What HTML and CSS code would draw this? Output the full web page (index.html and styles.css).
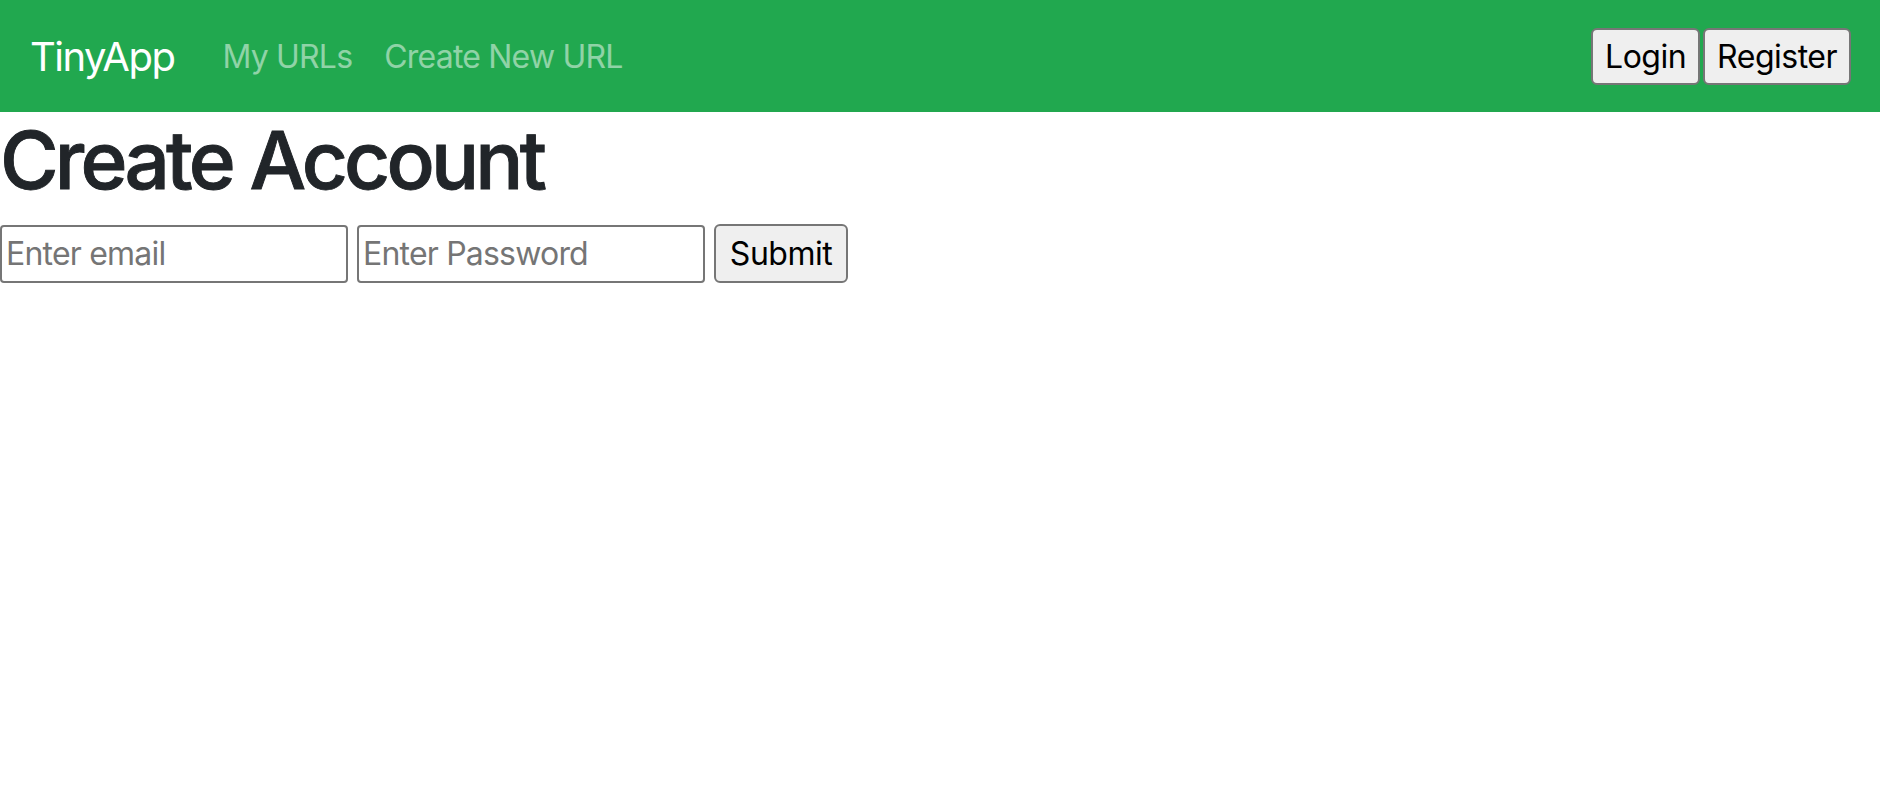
FILE: index.html
```html
<!DOCTYPE html>
<html lang="en">
<head>
<meta charset="utf-8">
<title>TinyApp - Register</title>
<link rel="stylesheet" href="styles.css">
</head>
<body>
<nav class="navbar">
  <a class="brand" href="#">TinyApp</a>
  <div class="nav-links">
    <a class="nav-link" href="#">My URLs</a>
    <a class="nav-link" href="#">Create New URL</a>
  </div>
  <div class="auth">
    <button class="btn" type="button">Login</button>
    <button class="btn" type="button">Register</button>
  </div>
</nav>
<main class="content">
  <h1 class="title">Create Account</h1>
  <form class="register-form">
    <input class="field" type="email" placeholder="Enter email">
    <input class="field" type="password" placeholder="Enter Password">
    <button class="btn submit" type="submit">Submit</button>
  </form>
</main>
</body>
</html>
```
FILE: styles.css
```css
* { box-sizing: border-box; }
html, body {
  margin: 0;
  padding: 0;
  background: #fff;
  font-family: "Inter", "Roboto", "Liberation Sans", sans-serif;
  color: #212529;
}
.navbar {
  display: flex;
  align-items: center;
  height: 112px;
  padding: 2px 29px 0 30px;
  background: #21a84f;
}
.brand {
  font-size: 40px;
  line-height: 60px;
  color: #fff;
  text-decoration: none;
  margin-right: 32px;
  letter-spacing: -1.5px;
}
.nav-links {
  display: flex;
  flex: 1;
}
.nav-link {
  font-size: 32px;
  line-height: 48px;
  padding: 0 16px;
  color: rgba(255, 255, 255, 0.5);
  text-decoration: none;
  letter-spacing: -0.8px;
}
.auth {
  display: flex;
  gap: 3px;
  margin-top: -2px;
}
.btn {
  font-family: inherit;
  font-size: 32px;
  line-height: 49px;
  height: 57px;
  padding: 0 12px;
  border: 2px solid #767676;
  border-radius: 6px;
  background: #efefef;
  color: #000;
  letter-spacing: -0.5px;
}
.content { padding: 0; }
.title {
  margin: 0 0 16px;
  font-size: 80px;
  line-height: 96px;
  font-weight: 500;
  color: #212529;
  letter-spacing: -3.8px;
  -webkit-text-stroke: 0.9px #212529;
}
.register-form {
  display: flex;
  align-items: center;
  gap: 9px;
}
.field {
  width: 348px;
  height: 58px;
  font-family: inherit;
  font-size: 32px;
  padding: 0 4px;
  border: 2px solid #767676;
  border-radius: 4px;
  color: #000;
  letter-spacing: -0.8px;
}
.field::placeholder { color: #757575; }
.submit {
  width: 134px;
  height: 59px;
  padding: 0;
}
```
